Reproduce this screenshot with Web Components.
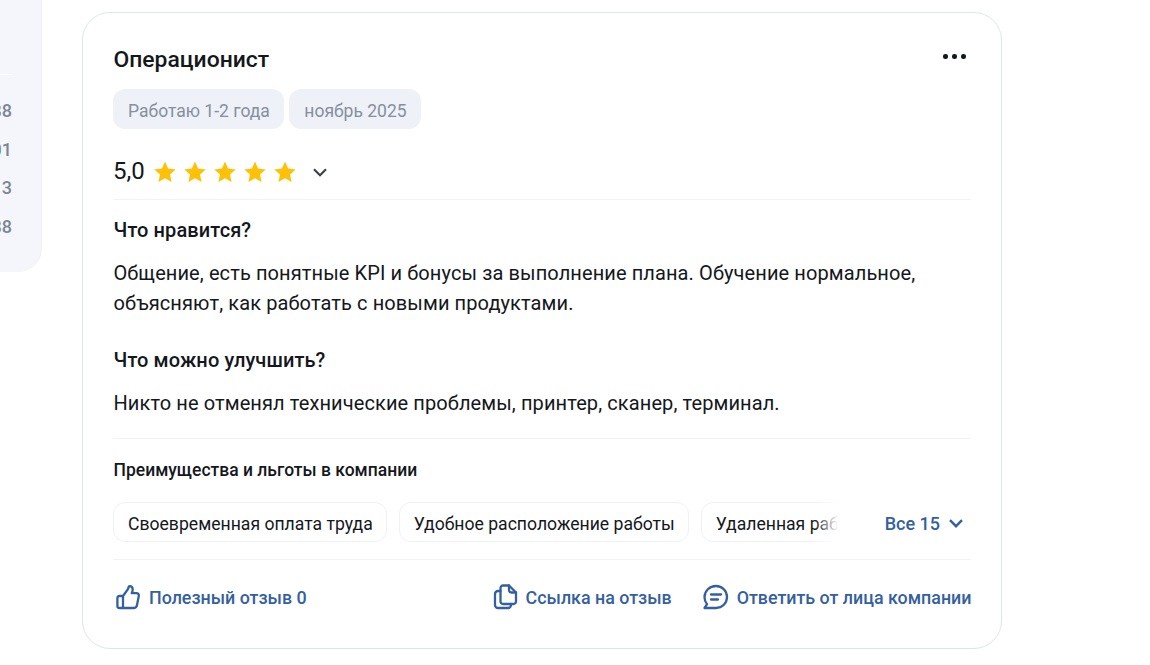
<!DOCTYPE html>
<html lang="ru">
<head>
<meta charset="utf-8">
<title>Отзыв</title>
<style>
  html, body { margin: 0; height: 100%; background: #fff; overflow: hidden; }
  body { font-family: Roboto, "Liberation Sans", sans-serif; color: #14171c; }
</style>
</head>
<body>
<review-page>
  <side-stats slot="side">
    <span>88</span><span>01</span><span>13</span><span>88</span>
  </side-stats>
  <review-card slot="card" title="Операционист">
    <info-tag slot="tags">Работаю 1-2 года</info-tag>
    <info-tag slot="tags">ноябрь 2025</info-tag>
    <star-rating slot="rating" value="5,0"></star-rating>
    <review-block slot="blocks" heading="Что нравится?">Общение, есть понятные KPI и бонусы за выполнение плана. Обучение нормальное, объясняют, как работать с новыми продуктами.</review-block>
    <review-block slot="blocks" heading="Что можно улучшить?">Никто не отменял технические проблемы, принтер, сканер, терминал.</review-block>
    <benefit-list slot="benefits" more="Все 15">
      <benefit-chip>Своевременная оплата труда</benefit-chip>
      <benefit-chip>Удобное расположение работы</benefit-chip>
      <benefit-chip>Удаленная работа</benefit-chip>
    </benefit-list>
    <action-link slot="left-actions" icon="like">Полезный отзыв 0</action-link>
    <action-link slot="right-actions" icon="copy">Ссылка на отзыв</action-link>
    <action-link slot="right-actions" icon="chat">Ответить от лица компании</action-link>
  </review-card>
</review-page>

<script>
class ReviewPage extends HTMLElement {
  constructor() {
    super();
    this.attachShadow({ mode: 'open' });
    this.shadowRoot.innerHTML = `
      <style>
        :host { display: flex; align-items: flex-start; gap: 40px; padding-top: 12px; }
      </style>
      <slot name="side"></slot>
      <slot name="card"></slot>
    `;
  }
}

class SideStats extends HTMLElement {
  constructor() {
    super();
    this.attachShadow({ mode: 'open' });
    this.shadowRoot.innerHTML = `
      <style>
        :host {
          display: block;
          box-sizing: border-box;
          width: 42px;
          height: 272px;
          margin-top: -12px;
          overflow: hidden;
          background: #f4f6fb;
          border-right: 1px solid #eef0f6;
          border-bottom-right-radius: 24px;
        }
        .line { height: 1px; margin-top: 74px; width: 12px; background: #fff; }
        .rows {
          display: flex;
          flex-direction: column;
          align-items: flex-end;
          gap: 19.4px;
          padding: 26.4px 29px 0 0;
          color: #7d8694;
          font-size: 18px;
          line-height: 19px;
          font-weight: 500;
        }
      </style>
      <div class="line"></div>
      <div class="rows"><slot></slot></div>
    `;
  }
}

class ReviewCard extends HTMLElement {
  constructor() {
    super();
    this.attachShadow({ mode: 'open' });
    this.shadowRoot.innerHTML = `
      <style>
        :host {
          display: block;
          box-sizing: border-box;
          width: 920px;
          height: 637px;
          padding: 30px 30px 0;
          background: #fff;
          border: 1px solid #dfe4ee;
          border-radius: 28px;
        }
        .top { display: flex; justify-content: space-between; align-items: center; height: 32px; }
        h2 { margin: 0; font-size: 22.9px; line-height: 32px; font-weight: 500; padding: 1px 0 0 .5px; }
        .dots { display: flex; gap: 4.5px; margin: 0 5.500px 5px 0; }
        .dots i { width: 4.500px; height: 4.500px; border-radius: 50%; background: #14171c; }
        .tags { display: flex; gap: 5px; margin-top: 14px; }
        .rating { height: 40px; margin-top: 22px; padding-bottom: 8px; display: flex; align-items: center; border-bottom: 1px solid #f1f3f7; }
        .blocks { display: flex; flex-direction: column; gap: 27px; padding: 15px 0 20px; border-bottom: 1px solid #f1f3f7; }
        .foot { display: flex; justify-content: space-between; align-items: center; padding-top: 23px; }
        .right { display: flex; gap: 29px; margin-right: -.5px; }
      </style>
      <div class="top"><h2></h2><div class="dots"><i></i><i></i><i></i></div></div>
      <div class="tags"><slot name="tags"></slot></div>
      <div class="rating"><slot name="rating"></slot></div>
      <div class="blocks"><slot name="blocks"></slot></div>
      <slot name="benefits"></slot>
      <div class="foot">
        <div><slot name="left-actions"></slot></div>
        <div class="right"><slot name="right-actions"></slot></div>
      </div>
    `;
  }

  connectedCallback() {
    this.shadowRoot.querySelector('h2').textContent = this.getAttribute('title');
    this.removeAttribute('title');
  }
}

class InfoTag extends HTMLElement {
  constructor() {
    super();
    this.attachShadow({ mode: 'open' });
    this.shadowRoot.innerHTML = `
      <style>
        :host {
          display: flex;
          align-items: center;
          box-sizing: border-box;
          height: 40px;
          padding: 3px 14.5px 0 15px;
          border-radius: 12px;
          background: #eef1f7;
          color: #868f9e;
          font-size: 17.5px;
        }
      </style>
      <slot></slot>
    `;
  }
}

class StarRating extends HTMLElement {
  constructor() {
    super();
    this.attachShadow({ mode: 'open' });
    const star = '<svg class="star" viewBox="0 0 24 24" width="24" height="24"><path fill="#ffc107" d="M12 1.6l3.1 7 7.6.8-5.7 5.1 1.6 7.5L12 18.2l-6.6 3.8L7 14.5 1.3 9.4l7.6-.8z"/></svg>';
    this.shadowRoot.innerHTML = `
      <style>
        :host { display: flex; align-items: center; }
        b { font-size: 24px; font-weight: 400; margin-right: 8px; line-height: 30px; }
        .stars { display: flex; gap: 6px; padding-top: 2px; }
        .star { display: block; }
        .chev { margin: 2px 0 0 15px; display: block; }
      </style>
      <b>${this.getAttribute('value')}</b>
      <div class="stars">${star.repeat(5)}</div>
      <svg class="chev" viewBox="0 0 16 16" width="16" height="16"><path d="M2 5.200l6 6 6-6" fill="none" stroke="#3d4148" stroke-width="2.200"/></svg>
    `;
  }
}

class ReviewBlock extends HTMLElement {
  constructor() {
    super();
    this.attachShadow({ mode: 'open' });
    this.shadowRoot.innerHTML = `
      <style>
        :host { display: block; padding-left: .5px; font-size: 20px; line-height: 30px; letter-spacing: .1px; }
        h3 { margin: 0 0 13px; font-size: 20px; line-height: 30px; font-weight: 500; }
      </style>
      <h3>${this.getAttribute('heading')}</h3>
      <div><slot></slot></div>
    `;
  }
}

class BenefitList extends HTMLElement {
  constructor() {
    super();
    this.attachShadow({ mode: 'open' });
    this.shadowRoot.innerHTML = `
      <style>
        :host { display: block; padding-top: 19px; }
        h4 { margin: 0; padding-left: .5px; font-size: 17.5px; line-height: 24px; font-weight: 500; }
        .row { display: flex; justify-content: space-between; align-items: center; margin-top: 20px; padding-bottom: 17px; border-bottom: 1px solid #f1f3f7; }
        .scroll { position: relative; width: 725px; overflow: hidden; display: flex; gap: 12px; }
        .scroll::after {
          content: "";
          position: absolute;
          top: 0; right: 0; bottom: 0;
          width: 24px;
          background: linear-gradient(to right, rgba(255,255,255,0), #fff);
        }
        .more { display: flex; align-items: center; gap: 8px; margin-right: 7px; padding-top: 2px; color: #3560a0; font-size: 18px; font-weight: 500; }
        .more svg { display: block; }
      </style>
      <h4>Преимущества и льготы в компании</h4>
      <div class="row">
        <div class="scroll"><slot></slot></div>
        <div class="more">${this.getAttribute('more')}
          <svg viewBox="0 0 16 16" width="16" height="16"><path d="M2 5.200l6 6 6-6" fill="none" stroke="#3560a0" stroke-width="2.400"/></svg>
        </div>
      </div>
    `;
  }
}

class BenefitChip extends HTMLElement {
  constructor() {
    super();
    this.attachShadow({ mode: 'open' });
    this.shadowRoot.innerHTML = `
      <style>
        :host {
          flex: none;
          display: flex;
          align-items: center;
          box-sizing: border-box;
          height: 40px;
          padding: 3px 13px 0 14px;
          border: 1px solid #eef1f6;
          border-radius: 12px;
          font-size: 17.6px;
          white-space: nowrap;
        }
      </style>
      <slot></slot>
    `;
  }
}

const ACTION_ICONS = {
  like: '<path d="M10 13l4.600-6.400c.7-1 .9-2 1-2.600.1-.6.5-.9 1.100-.9 1.800 0 3 1.500 3 3.400 0 1.200-.4 2.600-1 3.600h4.800c1.600 0 2.700 1.400 2.300 3l-1.800 9c-.3 1.500-1.200 2.900-2.800 2.900H6.400a2 2 0 0 1-2-2v-8a2 2 0 0 1 2-2H10v12"/>',
  copy: '<g transform="translate(1 0)"><path d="M12 2.500h6l7 7v9a2.500 2.500 0 0 1-2.500 2.500H12a2.500 2.500 0 0 1-2.500-2.500V5A2.500 2.500 0 0 1 12 2.500z"/><path d="M18 2.500V7a2.500 2.500 0 0 0 2.500 2.500H25"/><path d="M9.500 8H7a3 3 0 0 0-3 3v11a3 3 0 0 0 3 3h10a3 3 0 0 0 3-3v-1"/></g>',
  chat: '<path d="M15 3C8.600 3 3.500 8 3.500 14.200c0 2.700 1 5.100 2.600 7L3.500 25H15c6.200 0 11-5 11-11S21.200 3 15 3z"/><path d="M10 11.500h10M10 16.500h7"/>',
};

class ActionLink extends HTMLElement {
  constructor() {
    super();
    this.attachShadow({ mode: 'open' });
    const icon = ACTION_ICONS[this.getAttribute('icon')];
    this.shadowRoot.innerHTML = `
      <style>
        :host { display: flex; align-items: center; gap: 8px; color: #3560a0; font-size: 17.85px; font-weight: 500; }
        svg { display: block; fill: none; stroke: #3560a0; stroke-width: 2.300; stroke-linejoin: round; stroke-linecap: round; }
      </style>
      <svg viewBox="0 0 28 28" width="28" height="28">${icon}</svg>
      <span><slot></slot></span>
    `;
  }
}

customElements.define('review-page', ReviewPage);
customElements.define('side-stats', SideStats);
customElements.define('review-card', ReviewCard);
customElements.define('info-tag', InfoTag);
customElements.define('star-rating', StarRating);
customElements.define('review-block', ReviewBlock);
customElements.define('benefit-list', BenefitList);
customElements.define('benefit-chip', BenefitChip);
customElements.define('action-link', ActionLink);
</script>
</body>
</html>
